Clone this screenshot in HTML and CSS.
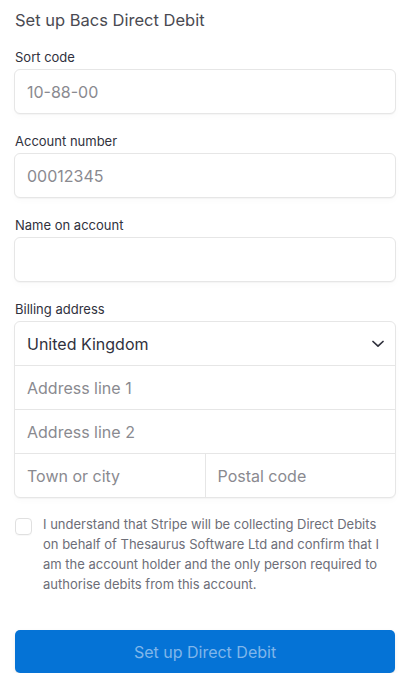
FILE: index.html
```html
<!DOCTYPE html>
<html lang="en">
<head>
<meta charset="utf-8">
<title>Set up Bacs Direct Debit</title>
<link rel="stylesheet" href="styles.css">
</head>
<body>
<form class="form">
  <h1 class="title">Set up Bacs Direct Debit</h1>

  <div class="field">
    <label class="label">Sort code</label>
    <div class="input"><span class="placeholder">10-88-00</span></div>
  </div>

  <div class="field">
    <label class="label">Account number</label>
    <div class="input"><span class="placeholder">00012345</span></div>
  </div>

  <div class="field">
    <label class="label">Name on account</label>
    <div class="input"></div>
  </div>

  <div class="field">
    <label class="label">Billing address</label>
    <div class="group">
      <div class="row select">
        <span class="value">United Kingdom</span>
        <svg class="chevron" width="12" height="8" viewBox="0 0 12 8"><path d="M1 1.5 L6 6.2 L11 1.5" fill="none" stroke="#30313d" stroke-width="1.7" stroke-linecap="round" stroke-linejoin="round"/></svg>
      </div>
      <div class="row"><span class="placeholder">Address line 1</span></div>
      <div class="row"><span class="placeholder">Address line 2</span></div>
      <div class="row split">
        <div class="cell"><span class="placeholder">Town or city</span></div>
        <div class="cell"><span class="placeholder">Postal code</span></div>
      </div>
    </div>
  </div>

  <div class="consent">
    <span class="checkbox"></span>
    <p class="consent-text">I understand that Stripe will be collecting Direct Debits on behalf of Thesaurus Software Ltd and confirm that I am the account holder and the only person required to authorise debits from this account.</p>
  </div>

  <button type="button" class="submit">Set up Direct Debit</button>
</form>
</body>
</html>
```

FILE: styles.css
```css
* { box-sizing: border-box; }

html, body {
  margin: 0;
  padding: 0;
  background: #ffffff;
}

body {
  font-family: Inter, "Noto Sans", "Liberation Sans", sans-serif;
  color: #30313d;
}

.form {
  padding: 8px 13px 0 14px;
}

.title {
  margin: 0 0 16px 1px;
  font-size: 16.5px;
  line-height: 24px;
  font-weight: 400;
  color: #4a4a52;
}

.field {
  margin-bottom: 18px;
}

.label {
  display: block;
  margin: 0 0 3px 1px;
  font-size: 13px;
  line-height: 18px;
  color: #30313d;
}

.input {
  height: 45px;
  border: 1px solid #e6e6e6;
  border-radius: 6px;
  background: #fff;
  box-shadow: 0 1px 1px rgba(0,0,0,0.03), 0 3px 6px rgba(0,0,0,0.02);
  display: flex;
  align-items: center;
  padding: 0 12px;
  font-size: 16px;
}

.placeholder {
  color: #8a8a90;
  font-size: 16px;
}

.group {
  border: 1px solid #e6e6e6;
  border-radius: 6px;
  box-shadow: 0 1px 1px rgba(0,0,0,0.03), 0 3px 6px rgba(0,0,0,0.02);
  background: #fff;
}

.row {
  height: 44px;
  display: flex;
  align-items: center;
  padding: 0 12px;
  border-top: 1px solid #e6e6e6;
}

.row:first-child {
  height: 43px;
  border-top: none;
}

.select {
  justify-content: space-between;
  padding-right: 11px;
}

.value {
  font-size: 16px;
  color: #30313d;
}

.split {
  padding: 0;
}

.cell {
  flex: 1;
  height: 100%;
  display: flex;
  align-items: center;
  padding: 0 12px;
}

.cell + .cell {
  border-left: 1px solid #e6e6e6;
}

.consent {
  display: flex;
  gap: 11px;
  margin-top: -2px;
  padding-left: 1px;
}

.checkbox {
  flex: none;
  width: 17px;
  height: 17px;
  margin-top: 4px;
  border: 1px solid #e0e0e0;
  border-radius: 4px;
  box-shadow: 0 1px 1px rgba(0,0,0,0.03);
}

.consent-text {
  margin: 0;
  font-size: 13px;
  line-height: 20px;
  color: #6d6e78;
  padding-right: 14px;
}

.submit {
  display: block;
  width: 380px;
  height: 43px;
  margin: 36px 0 0 1px;
  border: none;
  border-radius: 5px;
  background: #0573d6;
  color: #80b6ea;
  font-family: inherit;
  font-size: 16px;
  box-shadow: 0 1px 1px rgba(0,0,0,0.08), 0 2px 5px rgba(0,0,0,0.06);
}
```
